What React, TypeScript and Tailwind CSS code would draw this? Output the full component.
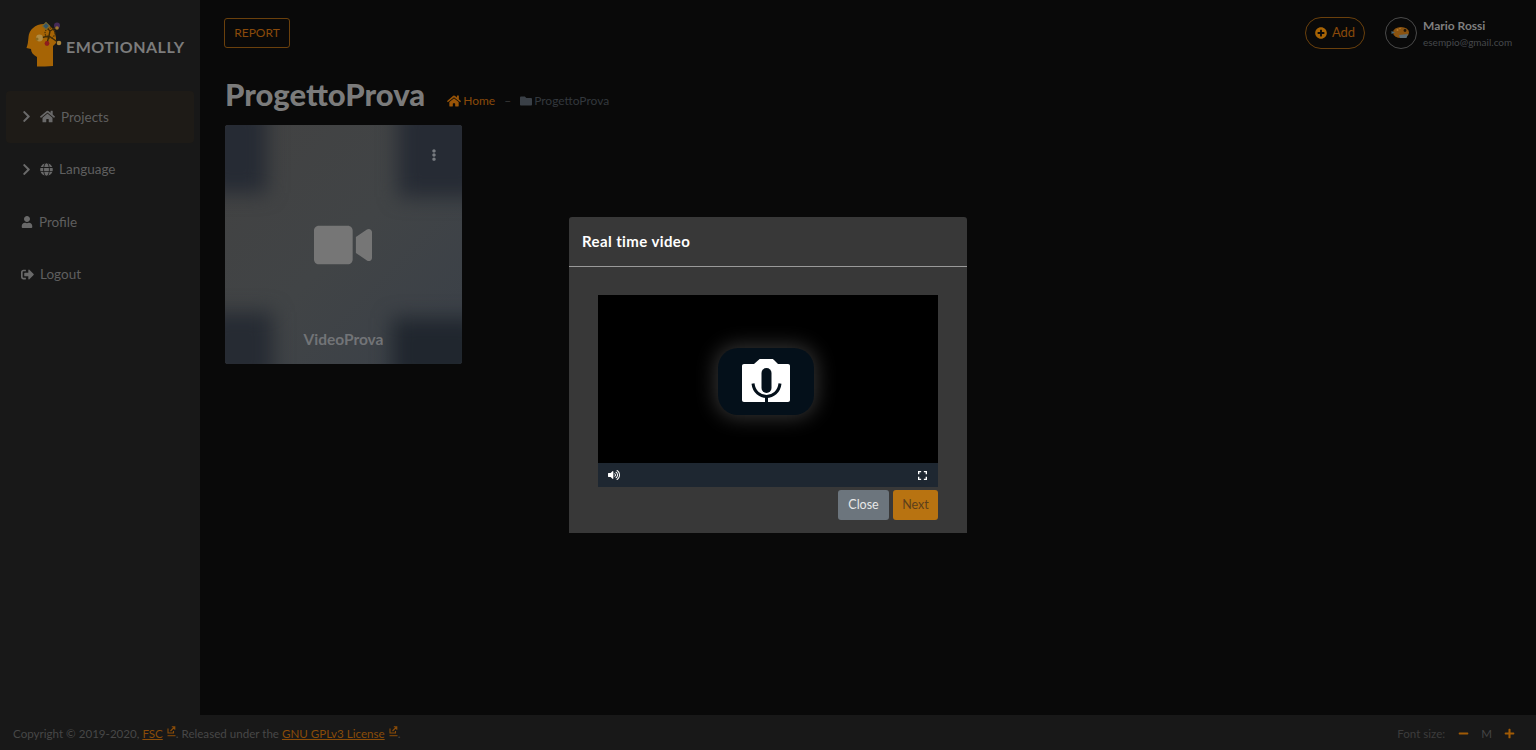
import React from 'react';
import { FaHome, FaGlobe, FaUser, FaSignOutAlt, FaFolder, FaPlusCircle, FaVideo, FaEllipsisV, FaVolumeUp, FaMinus, FaPlus, FaChevronRight } from 'react-icons/fa';

const font = "font-['Lato','Open_Sans',sans-serif]";

function LogoHead() {
  return (
    <svg viewBox="24 20 42 48" width="42" height="48" className="shrink-0">
      <path
        d="M37 66.500V57C33 55 31 52 31 49L26.500 48C28 44 28 42 28.500 37C29 30 35 24 44 24C50 24 55 30 56 38L56 43L53 46C53 50 53 54 53 66C48 66.500 42 66.500 37 66.500Z"
        fill="#a66405"
      />
      <path d="M46 27L50 31L57 27M50 31L49 36L40 38M49 36L47 43M49 36L59 43" stroke="#3d2a08" strokeWidth="1.400" fill="none" />
      <circle cx="50" cy="33" r="5" stroke="#4a3208" strokeWidth="1.200" fill="none" strokeDasharray="1.500 1" />
      <rect x="43.500" y="23.500" width="5" height="5" fill="#34566a" stroke="#7a6a30" strokeWidth="1" transform="rotate(45 46 26)" />
      <circle cx="57" cy="25.500" r="3" fill="#452a58" />
      <circle cx="57" cy="28" r="1.800" fill="#a07a30" />
      <circle cx="39.500" cy="38" r="3.400" fill="#b08c45" />
      <circle cx="37" cy="39" r="1.500" fill="#8a6a20" />
      <circle cx="47" cy="43.500" r="2.400" fill="#8e1d1d" />
      <circle cx="59" cy="43" r="2.300" fill="#a8843c" />
    </svg>
  );
}

function Avatar() {
  return (
    <div className="w-8 h-8 rounded-full border border-[#4a4a4a] flex items-center justify-center shrink-0">
      <svg viewBox="0 0 20 14" width="20" height="14">
        <ellipse cx="10" cy="6.500" rx="8" ry="5.500" fill="#8a5310" />
        <path d="M0.500 5L4 6.500L0.500 8Z" fill="#4a6a78" />
        <path d="M8 9L17 8L15.500 12L9 12Z" fill="#5c6b72" />
        <circle cx="14" cy="4.500" r="1.400" fill="#22180a" />
        <circle cx="6.500" cy="4" r="1" fill="#b5792a" />
        <circle cx="9" cy="2.500" r="0.800" fill="#b5792a" />
      </svg>
    </div>
  );
}

function CameraMic() {
  return (
    <svg viewBox="0 0 48 44" width="48" height="44">
      <path
        d="M2 5H12L16.500 1C17 0.500 17.500 0 18.500 0H30C31 0 31.500 0.500 32 1L36 5H46C47.200 5 48 5.800 48 7V41C48 42.200 47.200 43 46 43H2C0.800 43 0 42.200 0 41V7C0 5.800 0.800 5 2 5Z"
        fill="#ffffff"
      />
      <rect x="19.500" y="9" width="10" height="25" rx="5" fill="#04101a" />
      <path d="M11 24.500C12 33 18 37.500 24.500 37.500C31 37.500 37 33 38 24.500" stroke="#04101a" strokeWidth="3" fill="none" />
      <rect x="23" y="37" width="3" height="7" fill="#04101a" />
    </svg>
  );
}

function ExternalIcon() {
  return (
    <svg viewBox="0 0 9 11" width="9" height="11" className="inline-block align-[1px] ml-[4px]">
      <path d="M1 2.500V7H6.500V5" stroke="#8a4c08" strokeWidth="1.100" fill="none" />
      <path d="M3.500 5L7.500 1M4.800 0.800H7.800V3.800" stroke="#8a4c08" strokeWidth="1.100" fill="none" />
      <rect x="0.500" y="9.200" width="8" height="1" fill="#8a4c08" />
    </svg>
  );
}

function SideItem({ icon, label, arrow, active }: { icon: React.ReactNode; label: string; arrow?: boolean; active?: boolean }) {
  return (
    <div className={`flex items-center h-[52.5px] mx-[6px] pl-[15px] rounded-[4px] text-[13.500px] text-[#5f5f5f] ${active ? 'bg-[#1e1b17]' : ''}`}>
      {arrow && <FaChevronRight className="text-[#6a6a6a] text-[13px] mr-[7px] -ml-[1px]" />}
      {icon}
      <span className="ml-[6px]">{label}</span>
    </div>
  );
}

export default function App() {
  return (
    <div className={`h-screen w-full flex flex-col overflow-hidden bg-[#090909] ${font}`}>
      <div className="flex flex-1 min-h-0">
        <aside className="w-[200px] shrink-0 bg-[#181818] flex flex-col">
          <div className="h-[90.500px] pt-[20px] pl-[24px] flex items-start">
            <LogoHead />
            <span className="mt-[15px] text-[16px] font-bold tracking-[0.5px] text-[#7c7c7c]">EMOTIONALLY</span>
          </div>
          <SideItem active arrow label="Projects" icon={<FaHome className="text-[#696969] text-[15px]" />} />
          <SideItem arrow label="Language" icon={<FaGlobe className="text-[#696969] text-[13px]" />} />
          <SideItem label="Profile" icon={<FaUser className="text-[#696969] text-[12px]" />} />
          <SideItem label="Logout" icon={<FaSignOutAlt className="text-[#696969] text-[13px]" />} />
        </aside>

        <main className="flex-1 min-w-0 pl-[24px] pr-[24px]">
          <div className="flex items-center justify-between h-[66px]">
            <button className="h-[30px] w-[66px] border border-[#6a400c] rounded-[3px] text-[12px] text-[#8a4a0a]">REPORT</button>
            <div className="flex items-center">
              <button className="h-[32px] w-[60px] border border-[#6a400c] rounded-full flex items-center justify-center gap-[5px] text-[13px] text-[#8a4a0a]">
                <FaPlusCircle className="text-[12px] text-[#a86405]" />
                Add
              </button>
              <div className="ml-[20px]">
                <Avatar />
              </div>
              <div className="ml-[6px] w-[89px] mt-[2px]">
                <div className="text-[12px] font-bold leading-[16px] text-[#7f7f7f]">Mario Rossi</div>
                <div className="text-[10px] leading-[16px] text-[#45484b]">esempio@gmail.com</div>
              </div>
            </div>
          </div>

          <div className="flex items-center h-[59px] mb-[1px] -mt-[1px]">
            <h1 className="text-[31px] font-black leading-none text-[#7b7b7b] ml-[1px]">ProgettoProva</h1>
            <nav className="flex items-center ml-[22px] mt-[12px] text-[12px]">
              <FaHome className="text-[14px] text-[#9a5507]" />
              <span className="ml-[2px] text-[#8a4a0a]">Home</span>
              <span className="mx-[9px] text-[#3b3b3b]">–</span>
              <FaFolder className="text-[12px] text-[#3a4047]" />
              <span className="ml-[2px] text-[#33383d]">ProgettoProva</span>
            </nav>
          </div>

          <div className="relative ml-[1px] w-[237px] h-[239px] rounded-[3px] overflow-hidden bg-gradient-to-br from-[#424242] via-[#414446] to-[#3a4048]">
            <div className="absolute -left-[20px] -top-[20px] w-[62px] h-[88px] bg-[#262b34] blur-[10px]" />
            <div className="absolute -right-[20px] -top-[20px] w-[84px] h-[92px] bg-[#262b34] blur-[10px]" />
            <div className="absolute -left-[20px] -bottom-[20px] w-[68px] h-[72px] bg-[#262b33] blur-[10px]" />
            <div className="absolute -right-[20px] -bottom-[20px] w-[90px] h-[66px] bg-[#20262e] blur-[10px]" />
            <FaEllipsisV className="absolute right-[22px] top-[24px] text-[12px] text-[#777b80]" />
            <FaVideo className="absolute left-[89px] top-[91px] text-[#767676] text-[58px]" />
            <div className="absolute inset-x-0 top-[203px] text-center text-[15.500px] font-bold text-[#727477]">VideoProva</div>
          </div>
        </main>
      </div>

      <footer className="h-[35px] shrink-0 bg-[#181818] flex items-center justify-between pl-[13px] pr-[21px] pt-[3px] text-[11.600px] text-[#474747]">
        <div>
          Copyright © 2019-2020, <span className="text-[#8a4c08] underline">FSC</span>
          <ExternalIcon />. Released under the <span className="text-[#8a4c08] underline">GNU GPLv3 License</span>
          <ExternalIcon />.
        </div>
        <div className="flex items-center">
          <span className="text-[#3c3c3c]">Font size:</span>
          <FaMinus className="ml-[13px] text-[11px] text-[#a05a05]" />
          <span className="ml-[12px] text-[#454545]">M</span>
          <FaPlus className="ml-[12px] text-[11px] text-[#a05a05]" />
        </div>
      </footer>

      <div className="fixed inset-0 flex items-center justify-center">
        <div className="w-[398px] h-[316px] bg-[#383838] rounded-t-[3px]">
          <div className="h-[50px] px-[13px] flex items-center border-b border-[#9a9a9a] text-[15px] tracking-[0.4px] font-bold text-white">Real time video</div>
          <div className="pt-[28px] px-[29px]">
            <div className="h-[168px] bg-black flex items-center justify-center">
              <div className="w-[96px] h-[67px] mr-[4px] mt-[4px] rounded-[20px] bg-[#04101a] flex items-center justify-center shadow-[0_0_20px_3px_rgba(255,255,255,0.2)]">
                <CameraMic />
              </div>
            </div>
            <div className="h-[24px] bg-[#1e2731] flex items-center justify-between pl-[10px] pr-[11px]">
              <FaVolumeUp className="text-[12px] text-white" />
              <svg viewBox="0 0 10 10" width="9" height="9">
                <path d="M0.750 3.500V0.750H3.500M6.500 0.750H9.250V3.500M9.250 6.500V9.250H6.500M3.500 9.250H0.750V6.500" stroke="#fff" strokeWidth="1.500" fill="none" />
              </svg>
            </div>
            <div className="mt-[3px] flex justify-end gap-[4px]">
              <button className="w-[51px] h-[30px] rounded-[3px] bg-[#6c757d] text-[12.500px] text-[#e8e8e8]">Close</button>
              <button className="w-[45px] h-[30px] rounded-[3px] bg-[#b87311] text-[12.500px] text-[#5c3f1c]">Next</button>
            </div>
          </div>
        </div>
      </div>
    </div>
  );
}
